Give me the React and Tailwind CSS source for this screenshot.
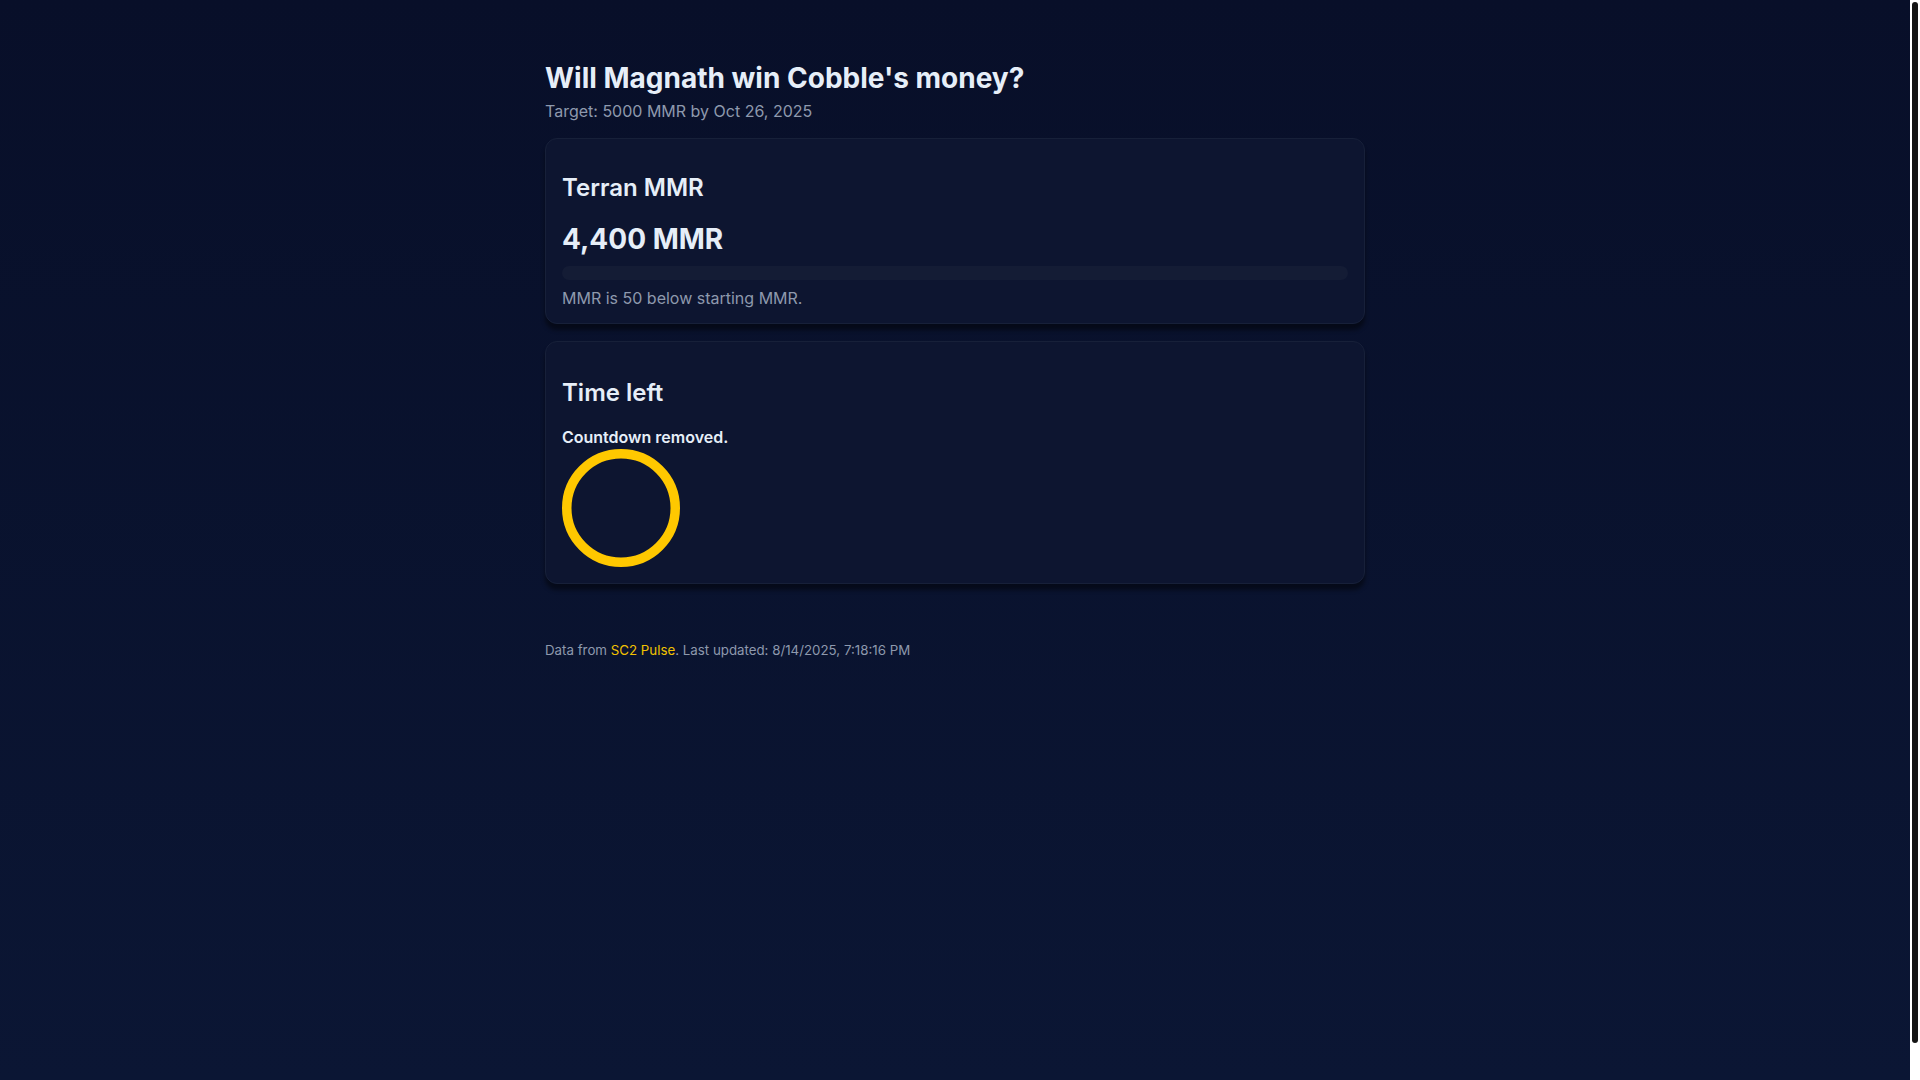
import React from 'react';

const Card = ({ className = '', children }) => (
  <section
    className={`rounded-xl border border-[#172039] bg-[#0d1530] px-4 shadow-[0_6px_4px_rgba(0,0,0,0.45)] ${className}`}
  >
    {children}
  </section>
);

export default function App() {
  const current = 4400;
  const start = 4450;
  const target = 5000;
  const pct = Math.max(0, Math.min(100, ((current - start) / (target - start)) * 100));

  return (
    <div className="flex h-screen overflow-hidden font-['Inter',sans-serif]">
      <div className="flex-1 bg-gradient-to-b from-[#080f29] to-[#0b1634]">
        <main className="mx-auto w-[820px] pt-[60px]">
          <h1 className="text-[28px] leading-9 font-bold text-[#e6eef8]">Will Magnath win Cobble's money?</h1>
          <p className="mt-[3px] text-base leading-6 text-[#8e99ad]">Target: 5000 MMR by Oct 26, 2025</p>

          {/* MMR */}
          <Card className="mt-[15px] pt-[33px] pb-[13px]">
            <h2 className="text-2xl leading-8 font-semibold text-[#e6eef8]">Terran MMR</h2>
            <div className="mt-[17px] text-[28px] leading-9 font-bold text-[#e6eef8]">4,400 MMR</div>
            <div className="mt-[9px] h-[14px] w-full rounded-full bg-[#141c35] overflow-hidden">
              <div className="h-full rounded-full bg-[#ffc800]" style={{ width: `${pct}%` }} />
            </div>
            <p className="mt-[6px] text-base leading-6 text-[#8e99ad]">MMR is 50 below starting MMR.</p>
          </Card>

          {/* Time left */}
          <Card className="mt-[17px] pt-[35px] pb-4">
            <h2 className="text-2xl leading-8 font-semibold text-[#e6eef8]">Time left</h2>
            <p className="mt-[16px] text-base leading-6 font-semibold text-[#e6eef8]">Countdown removed.</p>
            <svg width="118" height="118" viewBox="0 0 118 118" className="block">
              <circle cx="59" cy="59" r="54.25" fill="none" stroke="#ffc800" strokeWidth="9.5" />
            </svg>
          </Card>

          <footer className="mt-[56px] text-[13.3px] leading-5 text-[#8e99ad]">
            Data from <a href="#" className="text-[#f2c200]">SC2 Pulse</a>. Last updated: 8/14/2025, 7:18:16 PM
          </footer>
        </main>
      </div>

      {/* scrollbar as seen in the screenshot */}
      <aside className="w-[10px] bg-white">
        <div className="mx-[2px] mt-[2px] h-[1041px] rounded-full bg-[#141414]" />
      </aside>
    </div>
  );
}
